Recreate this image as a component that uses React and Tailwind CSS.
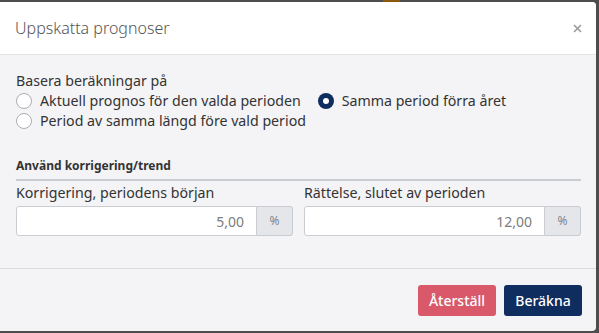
import React, { useState } from 'react';

const Radio = ({ checked, label, onClick }) => (
    <label onClick={onClick} className="flex items-center gap-2 h-5 cursor-pointer">
        {checked ? (
            <span className="w-4 h-4 rounded-full bg-[#0f2d5e] flex items-center justify-center">
                <span className="w-[6px] h-[6px] rounded-full bg-white" />
            </span>
        ) : (
            <span className="w-4 h-4 rounded-full bg-white border border-[#a9adb3]" />
        )}
        <span>{label}</span>
    </label>
);

const PercentInput = ({ label, value }) => (
    <div className="flex flex-col">
        <div className="h-5 leading-5 mt-[2px]">{label}</div>
        <div className="flex h-[30px] mt-[3px]">
            <input
                defaultValue={value}
                className="flex-1 min-w-0 bg-white border border-[#c9ccd1] rounded-l-[3px] px-3 text-right text-[14px] text-[#7d7d7d] outline-none"
            />
            <span className="w-[36px] flex items-center justify-center bg-[#e4e6ea] border border-l-0 border-[#c9ccd1] rounded-r-[3px] text-[12px] text-[#7a8896]">%</span>
        </div>
    </div>
);

export default function App() {
    const [base, setBase] = useState('last-year');

    return (
        <div className="relative w-[599px] h-[333px] bg-[#4d4d4d] pt-[2px] pr-[3px] overflow-hidden" style={{ fontFamily: '"Noto Sans", "Open Sans", sans-serif' }}>
            {/* something behind the backdrop */}
            <div className="absolute top-0 left-[383px] w-[17px] h-[2px] bg-[#8a5a10]" />

            <div className="h-[329px] bg-[#f4f4f6] rounded-r-[4px] flex flex-col overflow-hidden">
                {/* Header */}
                <div className="h-[53px] bg-white border-b border-[#e3e3e6] flex items-center justify-between pl-[15px] pr-[11px] shrink-0">
                    <h2 className="text-[16px] font-light text-[#555]">Uppskatta prognoser</h2>
                    <button className="w-4 h-4 flex items-center justify-center">
                        <svg width="9" height="9" viewBox="0 0 9 9">
                            <path d="M1 1 L8 8 M8 1 L1 8" stroke="#9a9a9a" strokeWidth="1.6" />
                        </svg>
                    </button>
                </div>

                {/* Body */}
                <div className="pt-[16px] pb-[32px] pl-[16px] pr-[15px] text-[14.2px] text-[#333] border-b border-[#dcdce0] shrink-0">
                    <div className="h-5 leading-5">Basera beräkningar på</div>
                    <div className="flex flex-wrap gap-x-[17px]">
                        <Radio checked={base === 'current'} onClick={() => setBase('current')} label="Aktuell prognos för den valda perioden" />
                        <Radio checked={base === 'last-year'} onClick={() => setBase('last-year')} label="Samma period förra året" />
                        <Radio checked={base === 'before'} onClick={() => setBase('before')} label="Period av samma längd före vald period" />
                    </div>

                    <div className="mt-[25px] h-5 leading-5 font-bold text-[12px] pb-[3px] box-content border-b-2 border-[#c9ccd1]">Använd korrigering/trend</div>

                    <div className="grid grid-cols-2 gap-x-[11px]">
                        <PercentInput label="Korrigering, periodens början" value="5,00" />
                        <PercentInput label="Rättelse, slutet av perioden" value="12,00" />
                    </div>
                </div>

                {/* Footer */}
                <div className="flex-1 flex items-start justify-end gap-2 pt-[16px] pr-[14px]">
                    <button className="h-[31px] w-[78px] rounded-[3px] bg-[#d9596a] text-white text-[14px] font-medium">Återställ</button>
                    <button className="h-[31px] w-[78px] rounded-[3px] bg-[#0f2d5e] text-white text-[14px] font-medium">Beräkna</button>
                </div>
            </div>
        </div>
    );
}
